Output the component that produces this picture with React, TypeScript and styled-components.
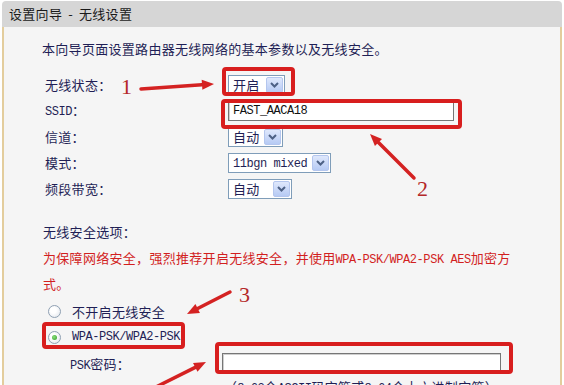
import React from "react";
import styled, { createGlobalStyle } from "styled-components";

const GlobalStyle = createGlobalStyle`
  html, body { margin: 0; padding: 0; background: #fff; overflow: hidden; }
  body { font-family: "Noto Sans CJK SC", "Noto Sans", sans-serif; }
`;

const Root = styled.div`
  position: relative;
  width: 564px;
  height: 385px;
  overflow: hidden;
  padding-top: 1px;
  box-sizing: border-box;
`;

const Frame = styled.div`
  margin-left: 2px;
  width: 560px;
`;

const Header = styled.div`
  height: 26px;
  background: #d6d6d6;
  border-radius: 4px 4px 0 0;
  padding-left: 7px;
  font-size: 13px;
  line-height: 26px;
  color: #1a1a1a;
  letter-spacing: 0.3px;
`;

const Dash = styled.span`
  margin: 0 6px;
`;

const Body = styled.div`
  background: #f5f5f5;
  border-left: 2px solid #e3cd9d;
  border-right: 2px solid #e3cd9d;
  padding: 12px 0 40px 38px;
  min-height: 400px;
  color: #1f1f55;
  font-size: 13px;
  letter-spacing: 0.3px;
`;

const Intro = styled.div`
  line-height: 20px;
`;

const Mono = styled.span`
  font-family: "Liberation Mono", "DejaVu Sans Mono", monospace;
  font-size: 12px;
  letter-spacing: -0.45px;
`;

const FormGrid = styled.div`
  margin-top: 13px;
  margin-left: 3px;
  display: grid;
  grid-template-columns: 183px 1fr;
  grid-auto-rows: 26px;
  align-items: center;
`;

const Label = styled.div`
  line-height: 20px;
  white-space: nowrap;
`;

const Select = styled.div<{ $w: number }>`
  width: ${(p) => p.$w}px;
  height: 20px;
  box-sizing: border-box;
  border: 1px solid #7f9db9;
  background: #fff;
  display: flex;
  align-items: center;
  padding-left: 4px;
`;

const SelectValue = styled.span`
  flex: 1;
  white-space: nowrap;
  line-height: 18px;
`;

const DropButton = styled.span`
  width: 17px;
  height: 16px;
  box-sizing: border-box;
  margin-right: 1px;
  background: linear-gradient(#dfe8fc, #b6caf4);
  border: 1px solid #b4c6ee;
  border-radius: 2px;
  display: flex;
  align-items: center;
  justify-content: center;
`;

const TextInput = styled.div<{ $w: number }>`
  width: ${(p) => p.$w}px;
  height: 20px;
  box-sizing: border-box;
  border: 1px solid #767676;
  box-shadow: inset 1px 1px 0 #cfcfcf;
  background: #fff;
  padding-left: 4px;
  display: flex;
  align-items: center;
  color: #111;
`;

const SectionTitle = styled.div`
  margin-top: 19px;
  margin-left: 1px;
  line-height: 22px;
`;

const Warning = styled.div`
  margin-top: 3px;
  margin-left: 1px;
  line-height: 23px;
  color: #d21f1f;
`;

const RadioList = styled.div`
  margin-top: 3px;
`;

const RadioRow = styled.div`
  height: 26px;
  display: flex;
  align-items: center;
  padding-left: 6px;
  gap: 11px;
`;

const Radio = styled.span<{ $checked?: boolean }>`
  position: relative;
  width: 13px;
  height: 13px;
  box-sizing: border-box;
  border-radius: 50%;
  border: 1px solid #8fa0b3;
  background: radial-gradient(circle at 40% 40%, #ffffff 30%, #dde2e8 100%);
  &::after {
    content: "";
    display: ${(p) => (p.$checked ? "block" : "none")};
    position: absolute;
    left: 3px;
    top: 3px;
    width: 5px;
    height: 5px;
    border-radius: 50%;
    background: radial-gradient(circle at 40% 40%, #8be07a, #2f9a28);
  }
`;

const PskRow = styled.div`
  height: 26px;
  display: flex;
  align-items: center;
  padding-left: 28px;
`;

const PskLabel = styled.span`
  width: 152px;
  white-space: nowrap;
`;

const Hint = styled.div`
  margin-left: 182px;
  line-height: 22px;
  white-space: nowrap;
`;

const Overlay = styled.svg`
  position: absolute;
  left: 0;
  top: 0;
  pointer-events: none;
`;

const Numeral = styled.span<{ $x: number; $y: number }>`
  position: absolute;
  left: ${(p) => p.$x}px;
  top: ${(p) => p.$y}px;
  font-family: "Liberation Serif", "DejaVu Serif", serif;
  font-size: 22px;
  line-height: 1;
  color: #b42828;
`;

const Chevron = () => (
  <svg width="9" height="6" viewBox="0 0 9 6">
    <path d="M1 1 L4.5 4.5 L8 1" fill="none" stroke="#4d6185" strokeWidth="2" />
  </svg>
);

const Drop = ({ w, value }: { w: number; value: React.ReactNode }) => (
  <Select $w={w}>
    <SelectValue>{value}</SelectValue>
    <DropButton>
      <Chevron />
    </DropButton>
  </Select>
);

type ArrowProps = { x1: number; y1: number; x2: number; y2: number };
const Arrow = ({ x1, y1, x2, y2 }: ArrowProps) => {
  const dx = x2 - x1;
  const dy = y2 - y1;
  const len = Math.hypot(dx, dy);
  const ux = dx / len;
  const uy = dy / len;
  const bx = x2 - ux * 12;
  const by = y2 - uy * 12;
  const px = -uy;
  const py = ux;
  return (
    <g>
      <line x1={x1} y1={y1} x2={bx} y2={by} stroke="#d42222" strokeWidth="3.5" strokeLinecap="round" />
      <polygon
        points={`${x2},${y2} ${bx + px * 5},${by + py * 5} ${bx - px * 5},${by - py * 5}`}
        fill="#d42222"
      />
    </g>
  );
};

const RED = "#d81e1e";

export default function App() {
  return (
    <Root>
      <GlobalStyle />
      <Frame>
        <Header>
          设置向导<Dash>-</Dash>无线设置
        </Header>
        <Body>
          <Intro>本向导页面设置路由器无线网络的基本参数以及无线安全。</Intro>
          <FormGrid>
            <Label>无线状态：</Label>
            <Drop w={57} value="开启" />
            <Label>
              <Mono>SSID</Mono>：
            </Label>
            <TextInput $w={226}>
              <Mono>FAST_AACA18</Mono>
            </TextInput>
            <Label>信道：</Label>
            <Drop w={55} value="自动" />
            <Label>模式：</Label>
            <Drop w={103} value={<Mono>11bgn mixed</Mono>} />
            <Label>频段带宽：</Label>
            <Drop w={64} value="自动" />
          </FormGrid>
          <SectionTitle>无线安全选项：</SectionTitle>
          <Warning>
            为保障网络安全，强烈推荐开启无线安全，并使用<Mono>WPA-PSK/WPA2-PSK AES</Mono>加密方
            <br />
            式。
          </Warning>
          <RadioList>
            <RadioRow>
              <Radio />
              <span>不开启无线安全</span>
            </RadioRow>
            <RadioRow>
              <Radio $checked />
              <Mono>WPA-PSK/WPA2-PSK</Mono>
            </RadioRow>
          </RadioList>
          <PskRow>
            <PskLabel>
              <Mono>PSK</Mono>密码：
            </PskLabel>
            <TextInput $w={279} />
          </PskRow>
          <Hint>
            （<Mono>8-63</Mono>个<Mono>ASCII</Mono>码字符或<Mono>8-64</Mono>个十六进制字符）
          </Hint>
        </Body>
      </Frame>

      <Overlay width={564} height={385} viewBox="0 0 564 385">
        <rect x={224} y={69} width={69} height={25} rx={2} fill="none" stroke={RED} strokeWidth={4} />
        <rect x={223} y={101} width={237} height={26} rx={2} fill="none" stroke={RED} strokeWidth={4} />
        <rect x={44} y={324} width={139} height={23} rx={2} fill="none" stroke={RED} strokeWidth={4} />
        <rect x={217} y={344} width={294} height={28} rx={2} fill="none" stroke={RED} strokeWidth={4} />
        <Arrow x1={141} y1={89} x2={214} y2={84} />
        <Arrow x1={414} y1={178} x2={370} y2={134} />
        <Arrow x1={230} y1={292} x2={187} y2={314} />
        <Arrow x1={150} y1={390} x2={206} y2={362} />
      </Overlay>
      <Numeral $x={121} $y={76}>1</Numeral>
      <Numeral $x={417} $y={178}>2</Numeral>
      <Numeral $x={239} $y={284}>3</Numeral>
    </Root>
  );
}
